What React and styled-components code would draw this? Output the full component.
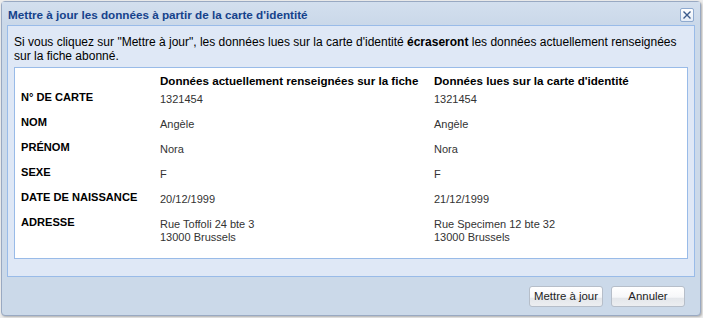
import React from "react";
import styled, { createGlobalStyle } from "styled-components";

const Global = createGlobalStyle`
  html, body { margin: 0; padding: 0; }
  body {
    background: #ececec;
    font-family: "Liberation Sans", Arial, sans-serif;
    width: 703px;
    height: 318px;
    overflow: hidden;
  }
`;

const Window = styled.div`
  box-sizing: border-box;
  margin: 1px 0 0 1px;
  width: 700px;
  height: 315px;
  border: 1px solid #99a9c2;
  border-radius: 4px;
  background: #cbd9e9;
  display: flex;
  flex-direction: column;
  box-shadow: 1px 1px 2px rgba(0,0,0,0.25);
`;

const Header = styled.div`
  height: 23px;
  display: flex;
  align-items: center;
  justify-content: space-between;
  padding: 0 6px 0 6px;
  background: linear-gradient(#d3dfee, #cad8e9);
`;

const Title = styled.span`
  font-weight: bold;
  font-size: 11.7px;
  color: #15428b;
  padding-top: 1px;
`;

const Close = styled.button`
  box-sizing: border-box;
  width: 14px;
  height: 14px;
  margin-top: 2px;
  padding: 0;
  border: 1px solid #8faacf;
  border-radius: 2px;
  background: linear-gradient(#ffffff, #e4ecf7);
  display: flex;
  align-items: center;
  justify-content: center;
`;

const Body = styled.div`
  margin: 0 5px;
  border: 1px solid #99bbe8;
  background: #dfe8f6;
  padding: 9px 6px 17px 6px;
  display: flex;
  flex-direction: column;
  gap: 4px;
`;

const Intro = styled.p`
  margin: 0;
  font-size: 12px;
  line-height: 14px;
  color: #000;
  b { font-weight: bold; }
`;

const Panel = styled.div`
  border: 1px solid #99bbe8;
  background: #fff;
  padding: 6px 6px 15px 6px;
  display: grid;
  grid-template-columns: 139px 274px 1fr;
  grid-auto-rows: 25px;
  grid-template-rows: 17px;
  align-content: start;
  height: 192px;
  box-sizing: border-box;
`;

const HeadCell = styled.div`
  font-weight: bold;
  font-size: 11.6px;
  color: #000;
  line-height: 13px;
`;

const Label = styled.div`
  font-weight: bold;
  font-size: 11.1px;
  color: #000;
  line-height: 13px;
`;

const Value = styled.div`
  font-size: 11px;
  color: #333;
  padding-top: 2px;
  line-height: 13px;
`;

const Footer = styled.div`
  flex: 1;
  display: flex;
  justify-content: flex-end;
  align-items: flex-start;
  padding: 9px 15px 0 0;
  gap: 8px;
`;

const Button = styled.button`
  box-sizing: border-box;
  width: 74px;
  height: 21px;
  border: 1px solid #b6bec9;
  border-radius: 3px;
  background: linear-gradient(#ffffff 0%, #f6f7f9 55%, #e3e6ea 56%, #eceef1 100%);
  font-family: "Liberation Sans", Arial, sans-serif;
  font-size: 11.4px;
  color: #222;
  padding: 0 0 1px 0;
`;

const rows = [
  ["N° DE CARTE", ["1321454"], ["1321454"]],
  ["NOM", ["Angèle"], ["Angèle"]],
  ["PRÉNOM", ["Nora"], ["Nora"]],
  ["SEXE", ["F"], ["F"]],
  ["DATE DE NAISSANCE", ["20/12/1999"], ["21/12/1999"]],
  ["ADRESSE", ["Rue Toffoli 24 bte 3", "13000 Brussels"], ["Rue Specimen 12 bte 32", "13000 Brussels"]],
];

export default function App() {
  return (
    <>
      <Global />
      <Window>
        <Header>
          <Title>Mettre à jour les données à partir de la carte d'identité</Title>
          <Close aria-label="Fermer">
            <svg width="8" height="8" viewBox="0 0 8 8">
              <path d="M0.5 0.5 L7.5 7.5 M7.5 0.5 L0.5 7.5" stroke="#3b5a8c" strokeWidth="1.4" />
            </svg>
          </Close>
        </Header>
        <Body>
          <Intro>
            Si vous cliquez sur "Mettre à jour", les données lues sur la carte d'identité <b>écraseront</b> les données actuellement renseignées sur la fiche abonné.
          </Intro>
          <Panel>
            <HeadCell />
            <HeadCell>Données actuellement renseignées sur la fiche</HeadCell>
            <HeadCell>Données lues sur la carte d'identité</HeadCell>
            {rows.map(([label, a, b]) => (
              <React.Fragment key={label}>
                <Label>{label}</Label>
                <Value>
                  {a.map((l) => (
                    <div key={l}>{l}</div>
                  ))}
                </Value>
                <Value>
                  {b.map((l) => (
                    <div key={l}>{l}</div>
                  ))}
                </Value>
              </React.Fragment>
            ))}
          </Panel>
        </Body>
        <Footer>
          <Button>Mettre à jour</Button>
          <Button>Annuler</Button>
        </Footer>
      </Window>
    </>
  );
}
